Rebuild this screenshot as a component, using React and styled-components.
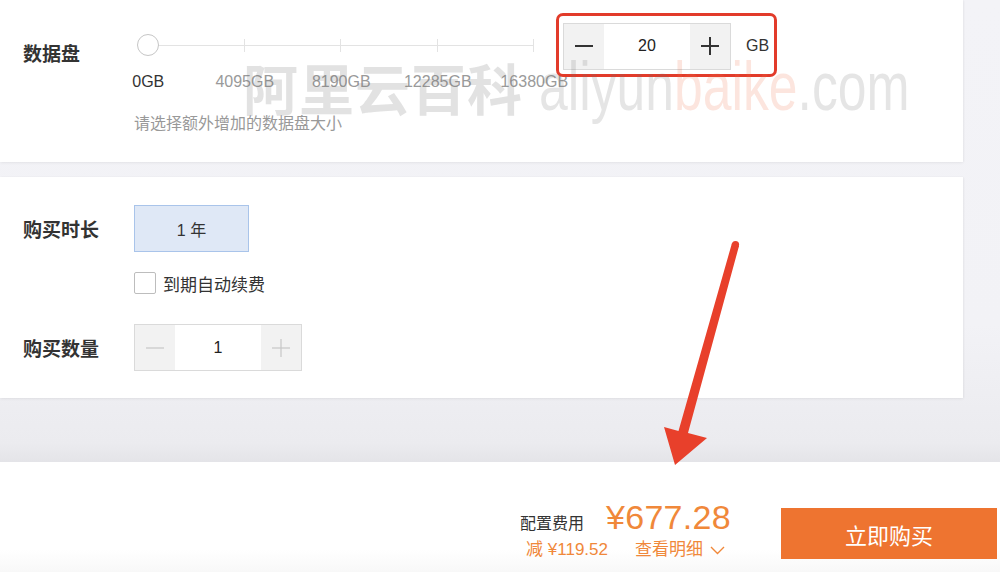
import React, {useState} from 'react';
import styled, {createGlobalStyle} from 'styled-components'

const FONT = `"Liberation Sans", "Noto Sans CJK SC", sans-serif`
const ORANGE = '#f0883a'

const GlobalStyle = createGlobalStyle`
  html, body {
    margin: 0;
    padding: 0;
    background: #f2f2f6;
  }
  * {
    box-sizing: border-box;
  }
`;

const marks = ['0GB', '4095GB', '8190GB', '12285GB', '16380GB']

const Minus = ({color, weight}) => (
    <svg width="18" height="18" viewBox="0 0 18 18">
        <line x1="0" y1="9" x2="18" y2="9" stroke={color} strokeWidth={weight}/>
    </svg>
)

const Plus = ({color, weight}) => (
    <svg width="18" height="18" viewBox="0 0 18 18">
        <line x1="0" y1="9" x2="18" y2="9" stroke={color} strokeWidth={weight}/>
        <line x1="9" y1="0" x2="9" y2="18" stroke={color} strokeWidth={weight}/>
    </svg>
)

const Stepper = ({value, active}) => {
    const color = active ? '#333' : '#c9c9c9'
    const weight = active ? 2 : 1.3
    return (
        <StepperBox>
            <StepButton><Minus color={color} weight={weight}/></StepButton>
            <StepValue>{value}</StepValue>
            <StepButton><Plus color={color} weight={weight}/></StepButton>
        </StepperBox>
    )
}

const App = () => {
    const [autoRenew, setAutoRenew] = useState(false)

    return (
        <>
            <GlobalStyle/>
            <Page>
                <Main>
                    <DiskCard>
                        <Label $top={38}>数据盘</Label>
                        <SliderCol>
                            <Track>
                                {marks.slice(1).map((m) => <Segment key={m}/>)}
                                <Knob/>
                            </Track>
                            <Marks>
                                {marks.map((m, i) => <Mark key={m} $first={i === 0}>{m}</Mark>)}
                            </Marks>
                            <Hint>请选择额外增加的数据盘大小</Hint>
                        </SliderCol>
                        <Highlight>
                            <Stepper value="20" active/>
                            <Unit>GB</Unit>
                        </Highlight>
                    </DiskCard>

                    <BuyCard>
                        <Row>
                            <Label>购买时长</Label>
                            <Option $selected>1 年</Option>
                        </Row>
                        <CheckRow onClick={() => setAutoRenew(!autoRenew)}>
                            <CheckBox $checked={autoRenew}/>
                            <span>到期自动续费</span>
                        </CheckRow>
                        <Row $gap={30}>
                            <Label>购买数量</Label>
                            <Stepper value="1"/>
                        </Row>
                    </BuyCard>
                </Main>

                <Footer>
                    <PriceBlock>
                        <PriceRow>
                            <PriceLabel>配置费用</PriceLabel>
                            <Price>¥677.28</Price>
                        </PriceRow>
                        <SubRow>
                            <span>减 ¥119.52</span>
                            <Detail>
                                查看明细
                                <svg width="15" height="9" viewBox="0 0 15 9">
                                    <polyline points="1,1 7.5,7.5 14,1" fill="none" stroke={ORANGE} strokeWidth="1.4"/>
                                </svg>
                            </Detail>
                        </SubRow>
                    </PriceBlock>
                    <BuyButton>立即购买</BuyButton>
                </Footer>

                <Watermark>
                    <WmCjk>阿里云百科</WmCjk>
                    <WmLatin>aliyun<em>baike</em>.com</WmLatin>
                </Watermark>

                <Arrow viewBox="0 0 1000 572" width="1000" height="572">
                    <polygon
                        fill="#e8402b"
                        points="732,243 739,246 688,433 707,438 675,465 664,427 678.5,431"
                    />
                    <circle cx="735.5" cy="244.5" r="3.6" fill="#e8402b"/>
                </Arrow>
            </Page>
        </>
    );
};

const Page = styled.div`
  position: relative;
  width: 1000px;
  height: 572px;
  overflow: hidden;
  display: flex;
  flex-direction: column;
  font-family: ${FONT};
  color: #333;
`;

const Main = styled.div`
  flex: 1;
  padding-right: 37px;
  display: flex;
  flex-direction: column;
  gap: 15px;
  background: linear-gradient(to bottom, #f3f3f7 0%, #f2f2f6 70%, #ebebef 96%, #e4e4e8 100%);
`;

const Card = styled.div`
  background: #fff;
  box-shadow: 0 1px 3px rgba(0, 0, 0, 0.06), 1px 0 2px rgba(0, 0, 0, 0.03);
  padding-left: 23px;
`;

const DiskCard = styled(Card)`
  height: 162px;
  display: flex;
  align-items: flex-start;
  padding-top: 13px;
`;

const BuyCard = styled(Card)`
  height: 221px;
  padding-top: 28px;
  display: flex;
  flex-direction: column;
`;

const Label = styled.div`
  width: 111px;
  flex-shrink: 0;
  font-size: 19px;
  font-weight: 700;
  line-height: 24px;
  padding-top: 5px;
  color: #333;
  margin-top: ${p => p.$top ? p.$top - 13 : 0}px;
`;

const SliderCol = styled.div`
  width: 422px;
  flex-shrink: 0;
  padding-top: 32px;
`;

const Track = styled.div`
  position: relative;
  margin-left: 14px;
  width: 386px;
  height: 1px;
  background: #e3e3e3;
  display: grid;
  grid-template-columns: repeat(4, 1fr);
`;

const Segment = styled.div`
  position: relative;

  &::after {
    content: '';
    position: absolute;
    right: 0;
    top: -6px;
    width: 1px;
    height: 13px;
    background: #e3e3e3;
  }
`;

const Knob = styled.div`
  position: absolute;
  left: -11px;
  top: -11px;
  width: 22px;
  height: 22px;
  border-radius: 50%;
  background: #fff;
  border: 1.5px solid #c6c6c6;
`;

const Marks = styled.div`
  margin-left: -34px;
  margin-top: 26px;
  display: grid;
  grid-template-columns: repeat(5, 96.5px);
`;

const Mark = styled.div`
  text-align: center;
  font-size: 16px;
  line-height: 20px;
  color: ${p => p.$first ? '#333' : '#9a9a9a'};
  white-space: nowrap;
`;

const Hint = styled.div`
  margin-top: 21px;
  font-size: 16px;
  line-height: 22px;
  color: #999;
`;

const Highlight = styled.div`
  display: flex;
  align-items: center;
  border: 3px solid #e23b2a;
  border-radius: 7px;
  padding: 7px 4px 5px 4px;
  width: 221px;
  height: 64px;
`;

const StepperBox = styled.div`
  display: flex;
  height: 47px;
  border: 1px solid #dadada;
  width: 168px;
  flex-shrink: 0;
`;

const StepButton = styled.div`
  width: 40px;
  background: #f2f2f2;
  display: flex;
  align-items: center;
  justify-content: center;
`;

const StepValue = styled.div`
  flex: 1;
  background: #fff;
  display: flex;
  align-items: center;
  justify-content: center;
  font-size: 16px;
  color: #222;
`;

const Unit = styled.div`
  margin-left: 15px;
  font-size: 16px;
  color: #333;
`;

const Row = styled.div`
  display: flex;
  align-items: center;
  height: 47px;
  margin-top: ${p => p.$gap || 0}px;
`;

const Option = styled.div`
  width: 115px;
  height: 47px;
  display: flex;
  align-items: center;
  justify-content: center;
  font-size: 16px;
  color: #333;
  background: ${p => p.$selected ? '#dfe8f6' : '#fff'};
  border: 1px solid ${p => p.$selected ? '#a9c4ea' : '#d9d9d9'};
`;

const CheckRow = styled.label`
  margin: 20px 0 0 111px;
  display: flex;
  align-items: center;
  gap: 7px;
  height: 22px;
  font-size: 17px;
  color: #333;
  cursor: pointer;
`;

const CheckBox = styled.span`
  width: 22px;
  height: 22px;
  border: 1px solid #bdbdbd;
  border-radius: 2px;
  background: ${p => p.$checked ? '#2d7fe0' : '#fff'};
`;

const Footer = styled.div`
  height: 110px;
  flex-shrink: 0;
  background: linear-gradient(to bottom, #fff 0%, #fff 80%, #f8f8f8 100%);
  display: flex;
  justify-content: flex-end;
  align-items: flex-start;
  padding: 35px 3px 0 0;
  gap: 50px;
`;

const PriceBlock = styled.div`
  display: flex;
  flex-direction: column;
  align-items: flex-end;
`;

const PriceRow = styled.div`
  display: flex;
  align-items: baseline;
  gap: 22px;
  height: 40px;
`;

const PriceLabel = styled.span`
  font-size: 16px;
  color: #333;
`;

const Price = styled.span`
  font-size: 34px;
  line-height: 40px;
  color: ${ORANGE};
  letter-spacing: 0.3px;
`;

const SubRow = styled.div`
  margin-top: 3px;
  padding-right: 6px;
  display: flex;
  align-items: center;
  gap: 27px;
  font-size: 17px;
  line-height: 20px;
  color: ${ORANGE};
`;

const Detail = styled.span`
  display: flex;
  align-items: center;
  gap: 7px;
  font-size: 17px;
`;

const BuyButton = styled.button`
  margin-top: 11px;
  width: 216px;
  height: 51px;
  border: none;
  background: #ee7430;
  color: #fff;
  font-family: ${FONT};
  font-size: 22px;
  cursor: pointer;
`;

const Watermark = styled.div`
  position: absolute;
  left: 243px;
  top: 52px;
  width: 800px;
  display: flex;
  align-items: baseline;
  gap: 16px;
  white-space: nowrap;
  pointer-events: none;
  line-height: 1;
`;

const WmCjk = styled.span`
  flex-shrink: 0;
  font-family: "Noto Sans CJK SC", sans-serif;
  font-size: 55px;
  font-weight: 700;
  color: rgba(110, 110, 110, 0.2);
  letter-spacing: 1px;
`;

const WmLatin = styled.span`
  flex-shrink: 0;
  display: inline-block;
  font-family: "Liberation Sans", sans-serif;
  font-size: 68px;
  color: rgba(110, 110, 110, 0.18);
  transform: scaleX(0.76);
  transform-origin: left center;

  em {
    font-style: normal;
    color: rgba(240, 110, 70, 0.18);
  }
`;

const Arrow = styled.svg`
  position: absolute;
  left: 0;
  top: 0;
  pointer-events: none;
`;

export default App;
